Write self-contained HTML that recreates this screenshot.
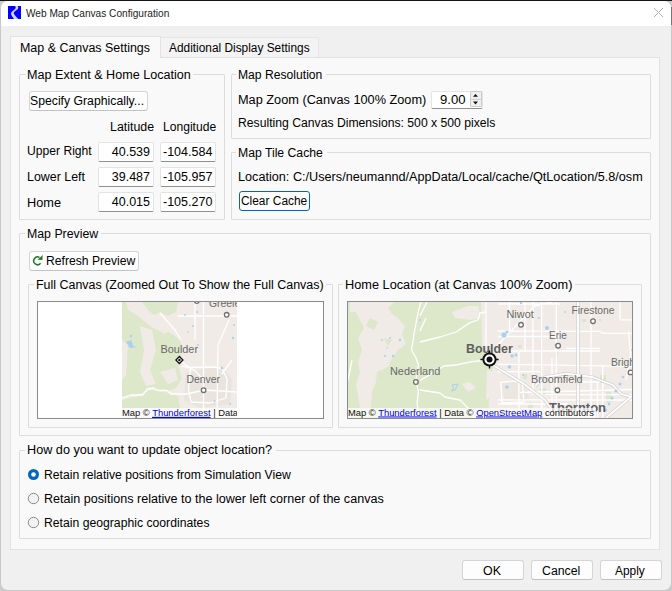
<!DOCTYPE html><html><head><meta charset="utf-8"><style>
*{box-sizing:border-box;margin:0;padding:0}
html,body{width:672px;height:591px;overflow:hidden}
body{position:relative;background:#cbcbcb;font-family:"Liberation Sans",sans-serif;color:#000}
.a{position:absolute}
.t{position:absolute;white-space:nowrap;font-size:12.5px;line-height:15px;transform-origin:0 0;color:#000}
.win{position:absolute;left:1px;top:1px;width:670px;height:589px;background:#f0f0f0;border-radius:7px;overflow:hidden;box-shadow:0 0 0 0.5px #c8c8c8}
.title{position:absolute;left:0;top:0;width:670px;height:25px;background:#fff}
.pane{position:absolute;left:10px;top:57px;width:650px;height:493px;background:#f9f9f9;border:1px solid #e2e2e2}
.grp{position:absolute;border:1px solid #dcdcdc;border-radius:1px}
.gap{position:absolute;background:#f9f9f9;height:4px}
.btn{position:absolute;background:#fdfdfd;border:1px solid #d5d5d5;border-bottom-color:#c2c2c2;border-radius:3px}
.inp{position:absolute;background:#fff;border:1px solid #e3e3e3;border-bottom:1px solid #8f8f8f;border-radius:2px}
.map{position:absolute;background:#fff;border:1px solid #8a8a8a}
</style></head><body>
<div class="win">
<div class="title"></div>
</div>
<div class="a" style="left:0;top:0;width:672px;height:1px;background:#141414"></div>
<div class="a" style="left:671px;top:7px;width:1px;height:18px;background:#777"></div>
<svg class="a" style="left:8px;top:6px" width="13" height="13" viewBox="0 0 13 13"><rect width="13" height="13" fill="#0000ff"/><path d="M7.2 0 L9.6 0 L10.4 1.6 L9.6 3.2 L6.6 5.6 L5.6 7.2 L6.6 9 L10.2 13 L6 13 L3.6 9.6 L2.9 7.5 L3.6 6 L6.6 3.6 L7.8 2 Z" fill="#d4d4ff"/></svg>
<div class="t" style="left:25.9px;top:6px;font-size:10.5px;transform:scaleX(0.964);color:#222">Web Map Canvas Configuration</div>

<svg class="a" style="left:653px;top:7px" width="11" height="11" viewBox="0 0 11 11"><path d="M1 1L10 10M10 1L1 10" stroke="#b2b2b2" stroke-width="1"/></svg>
<div class="a" style="left:160px;top:37px;width:159px;height:21px;background:#f3f3f3;border:1px solid #e6e6e6;border-bottom:none"></div>
<div class="pane"></div>
<div class="a" style="left:10px;top:36px;width:151px;height:22px;background:#f9f9f9;border:1px solid #e2e2e2;border-bottom:none"></div>
<div class="t" style="left:19.9px;top:41px;font-size:12.5px;transform:scaleX(0.995)">Map &amp; Canvas Settings</div>

<div class="t" style="left:169.4px;top:41px;font-size:12.5px;transform:scaleX(0.950)">Additional Display Settings</div>

<div class="grp" style="left:19px;top:74px;width:206px;height:146px"></div><div class="gap" style="left:26px;top:73px;width:167px"></div>
<div class="t" style="left:27.4px;top:68px;font-size:12.5px;transform:scaleX(1.007)">Map Extent &amp; Home Location</div>

<div class="btn" style="left:29px;top:91px;width:119px;height:20px"></div>
<div class="t" style="left:30.4px;top:94px;font-size:12.5px;transform:scaleX(0.979)">Specify Graphically...</div>

<div class="t" style="left:110.4px;top:120px;font-size:12.5px;transform:scaleX(0.991)">Latitude</div>

<div class="t" style="left:162.7px;top:120px;font-size:12.5px;transform:scaleX(0.967)">Longitude</div>

<div class="t" style="left:27.2px;top:144px;font-size:12.5px;transform:scaleX(0.970)">Upper Right</div>

<div class="t" style="left:27.1px;top:170px;font-size:12.5px;transform:scaleX(0.993)">Lower Left</div>

<div class="t" style="left:27.1px;top:196px;font-size:12.5px;transform:scaleX(1.019)">Home</div>

<div class="inp" style="left:98px;top:142px;width:56px;height:20px"></div>
<div class="inp" style="left:160px;top:142px;width:56px;height:20px"></div>
<div class="inp" style="left:98px;top:167px;width:56px;height:20px"></div>
<div class="inp" style="left:160px;top:167px;width:56px;height:20px"></div>
<div class="inp" style="left:98px;top:192px;width:56px;height:20px"></div>
<div class="inp" style="left:160px;top:192px;width:56px;height:20px"></div>
<div class="t" style="left:98px;width:52px;text-align:right;top:145px">40.539</div>
<div class="t" style="left:163px;top:145px">-104.584</div>
<div class="t" style="left:98px;width:52px;text-align:right;top:170px">39.487</div>
<div class="t" style="left:163px;top:170px">-105.957</div>
<div class="t" style="left:98px;width:52px;text-align:right;top:195px">40.015</div>
<div class="t" style="left:163px;top:195px">-105.270</div>
<div class="grp" style="left:231px;top:74px;width:420px;height:65px"></div><div class="gap" style="left:236px;top:73px;width:90px"></div>
<div class="t" style="left:237.9px;top:68px;font-size:12.5px;transform:scaleX(0.971)">Map Resolution</div>

<div class="t" style="left:237.9px;top:93px;font-size:12.5px;transform:scaleX(1.019)">Map Zoom (Canvas 100% Zoom)</div>

<div class="inp" style="left:431px;top:91px;width:52px;height:18px"></div>
<div class="t" style="left:440.4px;top:93px;font-size:12.5px;transform:scaleX(1.048)">9.00</div>

<div class="a" style="left:470px;top:91px;width:12px;height:16px;background:#f0f0f0;border:1px solid #cdcdcd;border-radius:1px"></div>
<svg class="a" style="left:470px;top:91px" width="12" height="16" viewBox="470 91 12 16"><path d="M471 99.4H481" stroke="#cdcdcd" stroke-width="1"/><path d="M473 96.8L475.5 93.9L478 96.8Z M473 101.6L475.5 104.5L478 101.6Z" fill="#111"/></svg>
<div class="t" style="left:237.9px;top:116px;font-size:12.5px;transform:scaleX(0.975)">Resulting Canvas Dimensions: 500 x 500 pixels</div>

<div class="grp" style="left:231px;top:152px;width:420px;height:68px"></div><div class="gap" style="left:236px;top:151px;width:91px"></div>
<div class="t" style="left:237.9px;top:146px;font-size:12.5px;transform:scaleX(0.977)">Map Tile Cache</div>

<div class="t" style="left:237.9px;top:170px;font-size:12.5px;transform:scaleX(1.013)">Location: C:/Users/neumannd/AppData/Local/cache/QtLocation/5.8/osm</div>

<div class="btn" style="left:239px;top:191px;width:71px;height:20px;border:1px solid #0067c0;background:#fdfdfd"></div>
<div class="t" style="left:241.0px;top:194px;font-size:12.5px;transform:scaleX(0.953)">Clear Cache</div>

<div class="grp" style="left:19px;top:233px;width:632px;height:203px"></div><div class="gap" style="left:25px;top:232px;width:76px"></div>
<div class="t" style="left:26.9px;top:227px;font-size:12.5px;transform:scaleX(0.986)">Map Preview</div>

<div class="btn" style="left:29px;top:251px;width:110px;height:20px"></div>
<div class="t" style="left:45.7px;top:254px;font-size:12.5px;transform:scaleX(0.973)">Refresh Preview</div>

<svg class="a" style="left:32px;top:253px" width="12" height="13" viewBox="32 253 12 13"><path d="M39.5 257.5 A3.85 3.85 0 1 0 40.55 263.3" fill="none" stroke="#237a2a" stroke-width="1.5"/><path d="M42.7 255 L42.4 260.1 L37.6 259.8 Z" fill="#237a2a"/></svg>
<div class="grp" style="left:28px;top:284px;width:305px;height:144px"></div><div class="gap" style="left:34px;top:283px;width:292px"></div>
<div class="t" style="left:35.9px;top:278px;font-size:12.5px;transform:scaleX(0.996)">Full Canvas (Zoomed Out To Show the Full Canvas)</div>

<div class="grp" style="left:338px;top:284px;width:304px;height:144px"></div><div class="gap" style="left:343px;top:283px;width:232px"></div>
<div class="t" style="left:345.2px;top:278px;font-size:12.5px;transform:scaleX(1.020)">Home Location (at Canvas 100% Zoom)</div>

<div class="map" style="left:37px;top:301px;width:287px;height:118px"></div>
<div class="map" style="left:347px;top:301px;width:286px;height:118px"></div>
<svg class="a" style="left:122px;top:302px" width="115" height="116" viewBox="122 302 115 116">
<rect x="122" y="302" width="115" height="116" fill="#f0ebe6"/>
<path d="M122 302 L178 302 L176 312 L168 316 L160 312 L150 318 L158 326 L172 334 L180 340 L182 352 L178 366 L182 378 L176 388 L166 392 L150 388 L140 394 L122 398 Z" fill="#dce8c9"/>
<path d="M122 400 L140 396 L150 390 L165 392 L178 396 L180 408 L122 408 Z" fill="#dce8c9"/>
<path d="M126 302 L142 302 L150 312 L162 320 L170 330 L165 334 L150 326 L138 316 L128 310 Z" fill="#f0ebe6"/>
<path d="M140 326 L152 330 L156 350 L150 370 L156 384 L146 386 L140 372 L144 350 Z" fill="#f0ebe6"/>
<path d="M160 372 L175 368 L178 380 L168 384 Z" fill="#f0ebe6"/>
<path d="M122 340 L128 345 L126 375 L122 380 Z" fill="#f0ebe6"/>
<path d="M186 372 L222 366 L232 380 L230 404 L200 408 L184 400 Z" fill="#e9e4dd"/>
<path d="M122 398 L131 395 L143 395 L147 389 L153 388 L158 390.5 L167 390.5 L171 394 L186 394 L205 390 L237 392" fill="none" stroke="#ffffff" stroke-width="1.3" stroke-linejoin="round"/>
<path d="M195 302 L195 340 M203.5 302 L203.5 420 M178 316 L237 316 M229 320 L218 345 L217 420 M160 313 L175 330 L181 340 M180 361 L195 371 L206 382 M190.6 367.4 L214 367 L222 368.5 L227 379 L226 398 L210 403 L191 402 L188.5 389 Z M232 360 L222 374 M182 366 L192 368" fill="none" stroke="#ffffff" stroke-width="1.3" stroke-linejoin="round"/>
<circle cx="130" cy="343" r="1.6" fill="#a9d0f2"/>
<circle cx="131" cy="336" r="1.2" fill="#a9d0f2"/>
<circle cx="185" cy="315" r="0.9" fill="#a9d0f2"/>
<circle cx="193" cy="326" r="1" fill="#a9d0f2"/>
<circle cx="197" cy="312" r="1" fill="#a9d0f2"/>
<circle cx="188" cy="332" r="0.8" fill="#a9d0f2"/>
<circle cx="198" cy="345" r="0.9" fill="#a9d0f2"/>
<circle cx="234" cy="325" r="1" fill="#a9d0f2"/>
<circle cx="233" cy="338" r="1.2" fill="#a9d0f2"/>
<circle cx="214.7" cy="400.9" r="1" fill="#a9d0f2"/>
<circle cx="230.3" cy="404" r="1" fill="#a9d0f2"/>
<circle cx="222" cy="368" r="1.2" fill="#a9d0f2"/>
<circle cx="173" cy="336" r="0.6" fill="#a9d0f2"/>
<path d="M126 342 L131 340 L133 346 L137 347 L130 348 Z" fill="#a9d0f2"/>
<text x="209" y="307" font-family="Liberation Sans" font-size="10.4" fill="#6a6a6a">Greele</text>
<text x="160.5" y="352.7" font-family="Liberation Sans" font-size="10.9" fill="#6a6a6a">Boulder</text>
<text x="186.5" y="383" font-family="Liberation Sans" font-size="10.4" fill="#6a6a6a">Denver</text>
<circle cx="226.7" cy="314.8" r="2.3" fill="#fff" stroke="#707070" stroke-width="1.3"/>
<circle cx="203.6" cy="390.2" r="2.3" fill="#fff" stroke="#707070" stroke-width="1.3"/>
<circle cx="196.8" cy="301" r="2.3" fill="#fff" stroke="#707070" stroke-width="1.3"/>
<path d="M179.4 355.6 L183.8 360 L179.4 364.4 L175 360 Z" fill="#111"/>
<path d="M179.4 357.4 L182 360 L179.4 362.6 L176.8 360 Z" fill="#fff"/>
<circle cx="179.4" cy="360" r="1.2" fill="#111"/>
<rect x="122" y="408" width="115" height="10" fill="#ffffff" fill-opacity="0.75"/>
<text x="122" y="416" font-family="Liberation Sans" font-size="9.4" fill="#111">Map © <tspan fill="#0000ee" text-decoration="underline">Thunderforest</tspan> | Data</text>
<path d="M152 417.3 L210 417.3" stroke="#0000ee" stroke-width="0.8"/>
</svg>
<svg class="a" style="left:348px;top:302px" width="284" height="116" viewBox="348 302 284 116">
<rect x="348" y="302" width="284" height="116" fill="#f0ebe6"/>
<path d="M348 302 L481 302 L482 345 L494 362 L490 378 L488 418 L348 418 Z" fill="#dce8c9"/>
<path d="M350 302 L394 302 L388 308 L392 314 L398 318 L405 326 L402 334 L406 344 L398 350 L392 358 L388 367 L377 372 L376 382 L372 392 L371 408 L360 408 L358 395 L356 385 L360 372 L358 362 L362 350 L358 338 L364 328 L360 320 L356 312 L350 312 Z" fill="#f1ebe7"/>
<path d="M370 318 L378 322 L374 330 L366 326 Z M384 338 L392 340 L388 346 Z" fill="#dce8c9"/>
<path d="M452 312 L468 306 L478 306 L481 318 L470 320 L455 318 Z" fill="#f1ebe7"/>
<path d="M462 384 L470 382 L476 388 L468 392 Z" fill="#f1ebe7"/>
<path d="M487 370 L494 372 L492 396 L486 400 Z" fill="#f1ebe7"/>
<path d="M500 380 L525 384 L530 400 L505 402 Z" fill="#ebe6df"/>
<rect x="518" y="345" width="4" height="3" fill="#dbe6cc"/>
<rect x="523" y="374" width="4" height="5" fill="#dbe6cc"/>
<rect x="540" y="388" width="6" height="6" fill="#dbe6cc"/>
<rect x="600" y="375" width="6" height="8" fill="#dbe6cc"/>
<rect x="606" y="392" width="5" height="10" fill="#dbe6cc"/>
<rect x="555" y="352" width="3" height="5" fill="#dbe6cc"/>
<rect x="582" y="319" width="4" height="3" fill="#dbe6cc"/>
<rect x="528" y="403" width="5" height="5" fill="#dbe6cc"/>
<path d="M420 342 L440 337 L456 332 L470 322.6 L478 320 L480 313 L486 312 M420 316 L427 302 M420 331 L426 318 M420 380.6 L444 366 L456 365 L472 361.6 L489 360 M420 390 L440 393 L445 397 L460 400 L470 410 L475 418 M421 302 L418.4 311 L414 334 L411.6 350 L416 358 L418.4 364.8 L416 380.6 L418.4 392 L417 403 L419.5 418 M352 360 L348 380" fill="none" stroke="#ffffff" stroke-width="1.3" stroke-linejoin="round"/>
<path d="M486 302 L486 346 M498 304 L560 304 M498 331 L600 331.3 L603 333.3 L632 333.3 M498 336.5 L560 336.5 M498 351 L600 351 M620 319.8 L632 319.8 M509.5 302 L509.5 331 M525 302 L525 352 M533 302 L533 395 M541.7 302 L541.7 420 M556.3 302 L556.3 420 M591 302 L591 420 M620 302 L620 319 M498 364.3 L632 366.4 M498 371.6 L540 371.6 M566 382 L600 382 M520 392.5 L632 389.5 M545 394.7 L632 394.7 M498 399.8 L632 400 M498 404 L568 404 M518.9 352 L518.9 420 M597.5 380 L597.5 420 M602.7 366 L602.7 420 M552 358 L552 420 M628.5 331 L630.6 354 L626 380 M498 344.8 L534.5 306 L552 302 M501 382 L522 381 L524 402 L502 403 Z M566 348.4 L600 348.4" fill="none" stroke="#ffffff" stroke-width="1.3" stroke-linejoin="round"/>
<path d="M491 364 L524 384 L545 400 L552 410 L556 418 M578 302 L578 418 M535 386 L545 377 L566 373.7 L592 377 L613 385 L621 394 L632 397 M606 418 L632 396" fill="none" stroke="#cfcfcf" stroke-width="3.2" stroke-linejoin="round"/>
<path d="M491 364 L524 384 L545 400 L552 410 L556 418 M578 302 L578 418 M535 386 L545 377 L566 373.7 L592 377 L613 385 L621 394 L632 397 M606 418 L632 396" fill="none" stroke="#ffffff" stroke-width="1.8" stroke-linejoin="round"/>
<circle cx="382" cy="340" r="0.9" fill="#a9d0f2"/>
<circle cx="390" cy="338" r="1" fill="#a9d0f2"/>
<circle cx="400" cy="340" r="1.3" fill="#a9d0f2"/>
<circle cx="387" cy="348" r="0.8" fill="#a9d0f2"/>
<circle cx="385" cy="356" r="1" fill="#a9d0f2"/>
<circle cx="393" cy="356" r="1.2" fill="#a9d0f2"/>
<circle cx="420" cy="320" r="1" fill="#a9d0f2"/>
<circle cx="504" cy="335" r="2.6" fill="#a9d0f2"/>
<circle cx="507" cy="332" r="1.6" fill="#a9d0f2"/>
<circle cx="547" cy="328" r="2" fill="#a9d0f2"/>
<circle cx="539" cy="318" r="1" fill="#a9d0f2"/>
<circle cx="512" cy="356" r="1.8" fill="#a9d0f2"/>
<circle cx="516" cy="355" r="1.5" fill="#a9d0f2"/>
<circle cx="521" cy="303" r="1.2" fill="#a9d0f2"/>
<circle cx="565" cy="312" r="1" fill="#a9d0f2"/>
<circle cx="609" cy="404" r="1.4" fill="#a9d0f2"/>
<circle cx="612" cy="398" r="1.6" fill="#a9d0f2"/>
<circle cx="616" cy="391" r="1.6" fill="#a9d0f2"/>
<circle cx="620" cy="384" r="1.5" fill="#a9d0f2"/>
<circle cx="623" cy="377" r="1.3" fill="#a9d0f2"/>
<circle cx="606" cy="410" r="1.2" fill="#a9d0f2"/>
<circle cx="509.5" cy="367" r="1.8" fill="#a9d0f2"/>
<circle cx="507" cy="387" r="1.8" fill="#a9d0f2"/>
<circle cx="600" cy="320" r="0.8" fill="#a9d0f2"/>
<circle cx="632" cy="350" r="1" fill="#a9d0f2"/>
<circle cx="523" cy="375" r="0.9" fill="#a9d0f2"/>
<circle cx="555" cy="345" r="0.8" fill="#a9d0f2"/>
<path d="M452 385 L458 384 L455 390 L451 391 L454 388 Z" fill="none" stroke="#a9d0f2" stroke-width="1"/>
<text x="390" y="375" font-size="10.9" font-family="Liberation Sans" fill="#6a6a6a">Nederland</text>
<text x="506.5" y="317.6" font-size="10.9" font-family="Liberation Sans" fill="#6a6a6a">Niwot</text>
<text x="571.5" y="314" font-size="10.3" font-family="Liberation Sans" fill="#6a6a6a">Firestone</text>
<text x="549" y="339" font-size="10" font-family="Liberation Sans" fill="#6a6a6a">Erie</text>
<text x="611" y="366" font-size="10.3" font-family="Liberation Sans" fill="#6a6a6a">Brigh</text>
<text x="531" y="383.1" font-size="10.8" font-family="Liberation Sans" fill="#6a6a6a">Broomfield</text>
<text x="466" y="353.3" font-size="12.4" font-weight="bold" font-family="Liberation Sans" fill="#5e5e5e">Boulder</text>
<text x="549" y="411.7" font-size="13" font-weight="bold" font-family="Liberation Sans" fill="#5e5e5e">Thornton</text>
<circle cx="415.9" cy="382" r="2.3" fill="#fff" stroke="#707070" stroke-width="1.3"/>
<circle cx="521" cy="324.8" r="2.3" fill="#fff" stroke="#707070" stroke-width="1.3"/>
<circle cx="593" cy="321.2" r="2.3" fill="#fff" stroke="#707070" stroke-width="1.3"/>
<circle cx="558.1" cy="345.7" r="2.3" fill="#fff" stroke="#707070" stroke-width="1.3"/>
<circle cx="630.5" cy="372.4" r="2.3" fill="#fff" stroke="#707070" stroke-width="1.3"/>
<circle cx="557.4" cy="390.2" r="2.3" fill="#fff" stroke="#707070" stroke-width="1.3"/>
<path d="M480.4 359.5 L498.6 359.5 M489.5 350.4 L489.5 368.6" stroke="#111" stroke-width="1.4"/>
<circle cx="489.5" cy="359.5" r="7.1" fill="#111"/>
<circle cx="489.5" cy="359.5" r="5.1" fill="#fff"/>
<circle cx="489.5" cy="359.5" r="3.0" fill="#111"/>
<rect x="348" y="408" width="248" height="10" fill="#ffffff" fill-opacity="0.7"/>
<text x="348" y="415.5" font-family="Liberation Sans" font-size="9.4" fill="#111">Map © <tspan fill="#0000ee" text-decoration="underline">Thunderforest</tspan> | Data © <tspan fill="#0000ee" text-decoration="underline">OpenStreetMap</tspan> contributors</text>
</svg>
<div class="grp" style="left:19px;top:450px;width:632px;height:89px"></div><div class="gap" style="left:25px;top:449px;width:251px"></div>
<div class="t" style="left:27.4px;top:443px;font-size:12.5px;transform:scaleX(1.013)">How do you want to update object location?</div>

<svg class="a" style="left:27px;top:468px" width="13" height="13" viewBox="0 0 13 13"><circle cx="6.5" cy="6.5" r="5.5" fill="#0067c0"/><circle cx="6.5" cy="6.5" r="2.3" fill="#fff"/></svg>
<svg class="a" style="left:27px;top:492px" width="13" height="13" viewBox="0 0 13 13"><circle cx="6.5" cy="6.5" r="5.2" fill="#f2f2f2" stroke="#8a8a8a" stroke-width="1"/></svg>
<svg class="a" style="left:27px;top:516px" width="13" height="13" viewBox="0 0 13 13"><circle cx="6.5" cy="6.5" r="5.2" fill="#f2f2f2" stroke="#8a8a8a" stroke-width="1"/></svg>
<div class="t" style="left:43.6px;top:468px;font-size:12.5px;transform:scaleX(0.974)">Retain relative positions from Simulation View</div>

<div class="t" style="left:43.6px;top:492px;font-size:12.5px;transform:scaleX(1.006)">Retain positions relative to the lower left corner of the canvas</div>

<div class="t" style="left:43.6px;top:516px;font-size:12.5px;transform:scaleX(0.976)">Retain geographic coordinates</div>

<div class="btn" style="left:462px;top:560px;width:62px;height:20px"></div>
<div class="btn" style="left:531px;top:560px;width:62px;height:20px"></div>
<div class="btn" style="left:600px;top:560px;width:62px;height:20px"></div>
<div class="t" style="left:482.9px;top:564px;font-size:12.5px;transform:scaleX(0.994)">OK</div>

<div class="t" style="left:542.2px;top:564px;font-size:12.5px;transform:scaleX(0.984)">Cancel</div>

<div class="t" style="left:615.3px;top:564px;font-size:12.5px;transform:scaleX(0.952)">Apply</div>

</body></html>
